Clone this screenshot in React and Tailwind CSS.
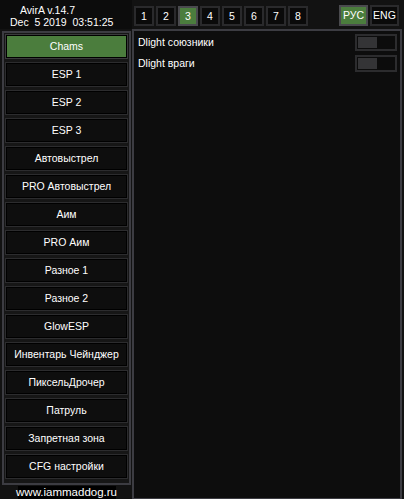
import React from "react";

const items = [
  "Chams",
  "ESP 1",
  "ESP 2",
  "ESP 3",
  "Автовыстрел",
  "PRO Автовыстрел",
  "Аим",
  "PRO Аим",
  "Разное 1",
  "Разное 2",
  "GlowESP",
  "Инвентарь Чейнджер",
  "ПиксельДрочер",
  "Патруль",
  "Запретная зона",
  "CFG настройки",
];

function Toggle() {
  return (
    <div className="w-[42px] h-[17px] border-2 border-[#2c2c2e] bg-[#0c0c0c] p-[1px] flex">
      <div className="w-[19px] h-full bg-[#343436]" />
    </div>
  );
}

export default function App() {
  return (
    <div
      className="w-[404px] h-[499px] bg-[#121212] text-white text-[10.5px] leading-none flex flex-col overflow-hidden"
      style={{ fontFamily: '"Liberation Sans", Arial, sans-serif' }}
    >
      {/* header */}
      <div className="h-[29px] flex items-start">
        <div className="w-[132px] h-[29px] pt-[5px] pl-[10px] flex flex-col gap-[1px] bg-[#0c0c0c]">
          <div className="h-[11px] pl-[10px] whitespace-pre">AvirA v.14.7</div>
          <div className="h-[11px] whitespace-pre">Dec  5 2019  03:51:25</div>
        </div>
        <div className="flex gap-[2px] pt-[6px] pl-[2px]">
          {[1, 2, 3, 4, 5, 6, 7, 8].map((n) => (
            <div
              key={n}
              className={
                n === 3
                  ? "w-[20px] h-[20px] border-2 border-[#4a4a4e] bg-[#4b7d3d] flex items-center justify-center"
                  : "w-[20px] h-[20px] border-2 border-[#2a2a2c] bg-[#0a0a0a] flex items-center justify-center"
              }
            >
              {n}
            </div>
          ))}
        </div>
        <div className="ml-auto flex gap-[2px] pt-[5px] pr-[5px]">
          <div className="w-[29px] h-[21px] border-2 border-[#4a4a4e] bg-[#4b7d3d] flex items-center justify-center">
            РУС
          </div>
          <div className="w-[29px] h-[21px] border-2 border-[#2a2a2c] bg-[#0a0a0a] flex items-center justify-center">
            ENG
          </div>
        </div>
      </div>

      {/* body */}
      <div className="flex-1 flex pl-[2px] gap-[1px] pb-[1px] pr-[2px]">
        <div className="w-[129px] flex flex-col items-center pt-[2px]">
          <div className="w-[129px] h-[454px] border-2 border-[#3c3c42] bg-[#161616] px-[1px] pt-[1px] flex flex-col gap-[3px]">
            {items.map((t, i) => (
              <div
                key={t}
                className={
                  i === 0
                    ? "h-[25px] border border-[#3a3a3c]"
                    : "h-[25px] border border-[#2c2c2e]"
                }
              >
                <div
                  className={
                    i === 0
                      ? "h-full border border-black bg-[#4b7d3d] flex items-center justify-center"
                      : "h-full border border-black bg-[#0e0e0e] flex items-center justify-center"
                  }
                >
                  {t}
                </div>
              </div>
            ))}
          </div>
          <div className="mt-[1px] h-[14px] w-[98px] bg-black flex items-center justify-center text-[11.5px]">
            www.iammaddog.ru
          </div>
        </div>
        <div className="flex-1 border-2 border-[#3c3c42] bg-[#0d0d0d] pl-[4px] pr-[3px] pt-[3px] flex flex-col gap-[4px]">
          {["Dlight союзники", "Dlight враги"].map((t) => (
            <div key={t} className="h-[17px] flex items-center justify-between">
              <span>{t}</span>
              <Toggle />
            </div>
          ))}
        </div>
      </div>
    </div>
  );
}
